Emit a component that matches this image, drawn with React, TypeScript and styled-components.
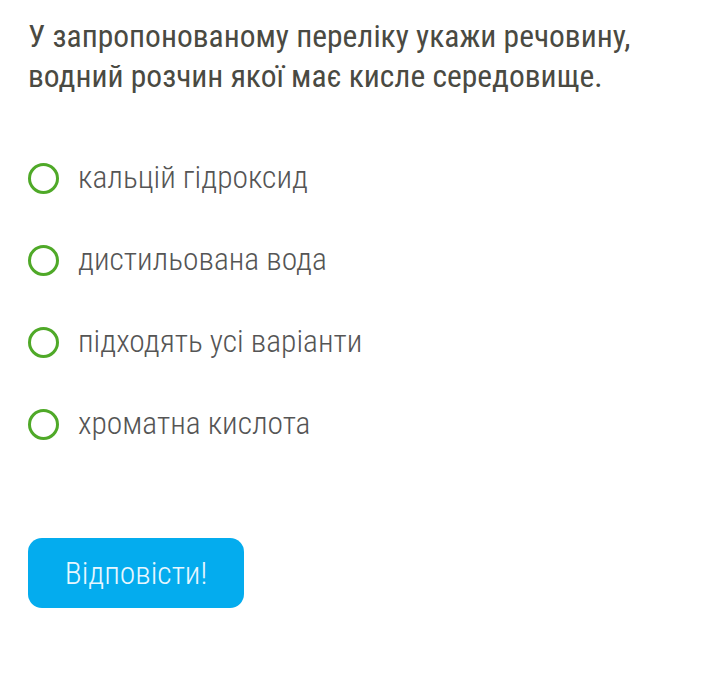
import React from "react";
import styled, { createGlobalStyle } from "styled-components";

const GlobalStyle = createGlobalStyle`
  html, body {
    margin: 0;
    padding: 0;
    background: #ffffff;
  }
  body {
    font-family: "Roboto Condensed", Roboto, "Liberation Sans", sans-serif;
  }
`;

const Page = styled.div`
  padding: 17px 28px 0 28px;
  display: flex;
  flex-direction: column;
`;

const Question = styled.h1`
  margin: 0;
  font-family: "Roboto Condensed", Roboto, sans-serif;
  font-stretch: condensed;
  font-weight: 400;
  font-size: 31.5px;
  line-height: 40px;
  color: #4a4a42;
`;

const Options = styled.div`
  display: flex;
  flex-direction: column;
  gap: 51px;
  margin-top: 66px;
`;

const Option = styled.label`
  display: flex;
  align-items: center;
  gap: 19px;
  height: 31px;
  cursor: pointer;
`;

const Radio = styled.span`
  width: 31px;
  height: 31px;
  box-sizing: border-box;
  border: 3.5px solid #4fa928;
  border-radius: 50%;
  flex-shrink: 0;
`;

const OptionText = styled.span`
  font-family: "Roboto Condensed", Roboto, sans-serif;
  font-stretch: condensed;
  font-weight: 300;
  font-size: 31.5px;
  color: #555555;
  position: relative;
  top: -1px;
`;

const SubmitButton = styled.button`
  margin-top: 98px;
  align-self: flex-start;
  width: 216px;
  height: 70px;
  border: none;
  border-radius: 14px;
  background: #04acee;
  color: #e8f7ff;
  font-family: "Roboto Condensed", Roboto, sans-serif;
  font-stretch: condensed;
  font-weight: 300;
  font-size: 31.5px;
  cursor: pointer;
`;

const answers = [
  "кальцій гідроксид",
  "дистильована вода",
  "підходять усі варіанти",
  "хроматна кислота",
];

export default function App() {
  return (
    <>
      <GlobalStyle />
      <Page>
        <Question>
          У запропонованому переліку укажи речовину,
          <br />
          водний розчин якої має кисле середовище.
        </Question>
        <Options>
          {answers.map((a) => (
            <Option key={a}>
              <Radio />
              <OptionText>{a}</OptionText>
            </Option>
          ))}
        </Options>
        <SubmitButton>Відповісти!</SubmitButton>
      </Page>
    </>
  );
}
